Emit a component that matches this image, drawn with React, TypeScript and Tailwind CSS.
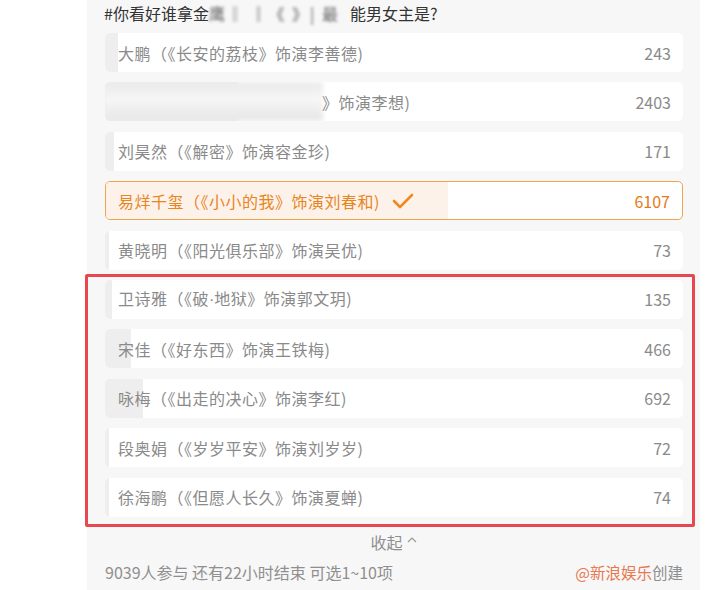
import React from "react";

type Opt = { label: React.ReactNode; count: number; selected?: boolean; blur?: boolean };

const TOTAL = 10436;
const ROW_W = 578;

const opts: Opt[] = [
  { label: "大鹏（《长安的荔枝》饰演李善德)", count: 243 },
  { label: "》饰演李想)", count: 2403, blur: true },
  { label: "刘昊然（《解密》饰演容金珍)", count: 171 },
  { label: "易烊千玺（《小小的我》饰演刘春和)", count: 6107, selected: true },
  { label: "黄晓明（《阳光俱乐部》饰演吴优)", count: 73 },
  {
    label: (
      <>
        卫诗雅（《破<span className="font-['Liberation_Sans'] tracking-normal">·</span>地狱》饰演郭文玥)
      </>
    ),
    count: 135,
  },
  { label: "宋佳（《好东西》饰演王铁梅)", count: 466 },
  { label: "咏梅（《出走的决心》饰演李红)", count: 692 },
  { label: "段奥娟（《岁岁平安》饰演刘岁岁)", count: 72 },
  { label: "徐海鹏（《但愿人长久》饰演夏蝉)", count: 74 },
];

function Row({ o }: { o: Opt }) {
  const w = (o.count / TOTAL) * ROW_W + (o.selected ? 4 : 0);
  return (
    <div
      className={
        "relative h-[39px] rounded-[5px] overflow-hidden " +
        (o.selected ? "bg-white border border-[#efa54a]" : "bg-white")
      }
    >
      <div
        className={"absolute left-0 top-0 bottom-0 " + (o.selected ? "bg-[#fdf2ea]" : "bg-[#eeeeee]")}
        style={{ width: w }}
      />
      {o.blur && (
        <div className="absolute left-0 top-0 bottom-0 w-[218px] bg-[linear-gradient(to_bottom,#e9e9e9,#f7f7f7_45%,#eeeeee_70%,#e7e7e7)] blur-[2px]" />
      )}
      <div
        className={
          "relative h-full flex items-center justify-between pr-[12px] " +
          (o.selected ? "pl-[12px]" : "pl-[13px]")
        }
      >
        <div
          className={
            "flex items-center tracking-[0.5px] " + (o.selected ? "text-[#e8851f]" : "text-[#8a8a8a]")
          }
        >
          {o.blur && <span className="inline-block w-[204px]" />}
          <span>{o.label}</span>
          {o.selected && (
            <svg width="22" height="16" viewBox="0 0 22 16" className="ml-[12px]">
              <polyline
                points="2,8 8,14 20,2"
                fill="none"
                stroke="#ee8a21"
                strokeWidth="2.6"
                strokeLinecap="round"
                strokeLinejoin="round"
              />
            </svg>
          )}
        </div>
        <span className={o.selected ? "text-[#e47b14]" : "text-[#8a8a8a]"}>{o.count}</span>
      </div>
    </div>
  );
}

export default function App() {
  return (
    <div
      className="w-[719px] h-[590px] bg-white flex overflow-hidden"
      style={{ fontFamily: '"Noto Sans CJK SC", "Noto Sans", sans-serif' }}
    >
      <div className="ml-[87px] w-[613px] h-full bg-[#f7f7f7] pl-[18px] pr-[17px] flex flex-col text-[16px]">
        <div className="h-[27px] leading-[27px] text-[#333333] -ml-[1px] flex items-center whitespace-nowrap">
          <span>#你看好谁拿金</span>
          <span className="inline-block w-[141px] overflow-hidden text-[#666] blur-[1.8px] tracking-[2px]">
            鹰‖ ‖《 》| 最
          </span>
          <span>能男女主是?</span>
        </div>
        <div className="mt-[6px] flex flex-col gap-[10.4px]">
          {opts.slice(0, 5).map((o, i) => (
            <Row key={i} o={o} />
          ))}
          <div className="relative flex flex-col gap-[10.4px]">
            <div className="absolute -left-[20px] -right-[12px] -top-[6px] -bottom-[10px] border-[3px] border-[#e9474f] rounded-[2px] pointer-events-none" />
            {opts.slice(5).map((o, i) => (
              <Row key={i} o={o} />
            ))}
          </div>
        </div>
        <div className="mt-[15px] flex justify-center items-center text-[16px] text-[#8f8f8f] leading-[20px]">
          <span>收起</span>
          <svg width="12" height="8" viewBox="0 0 12 8" className="ml-[3px] -mt-[4px]">
            <polyline points="2,6 6,2 10,6" fill="none" stroke="#9a9a9a" strokeWidth="1.2" />
          </svg>
        </div>
        <div className="mt-[10px] flex justify-between items-center text-[16px] leading-[20px] text-[#8f8f8f]">
          <span>9039人参与 还有22小时结束 可选1~10项</span>
          <span className="text-[15.5px]">
            <span className="text-[#e8784f]">@新浪娱乐</span>创建
          </span>
        </div>
      </div>
    </div>
  );
}
